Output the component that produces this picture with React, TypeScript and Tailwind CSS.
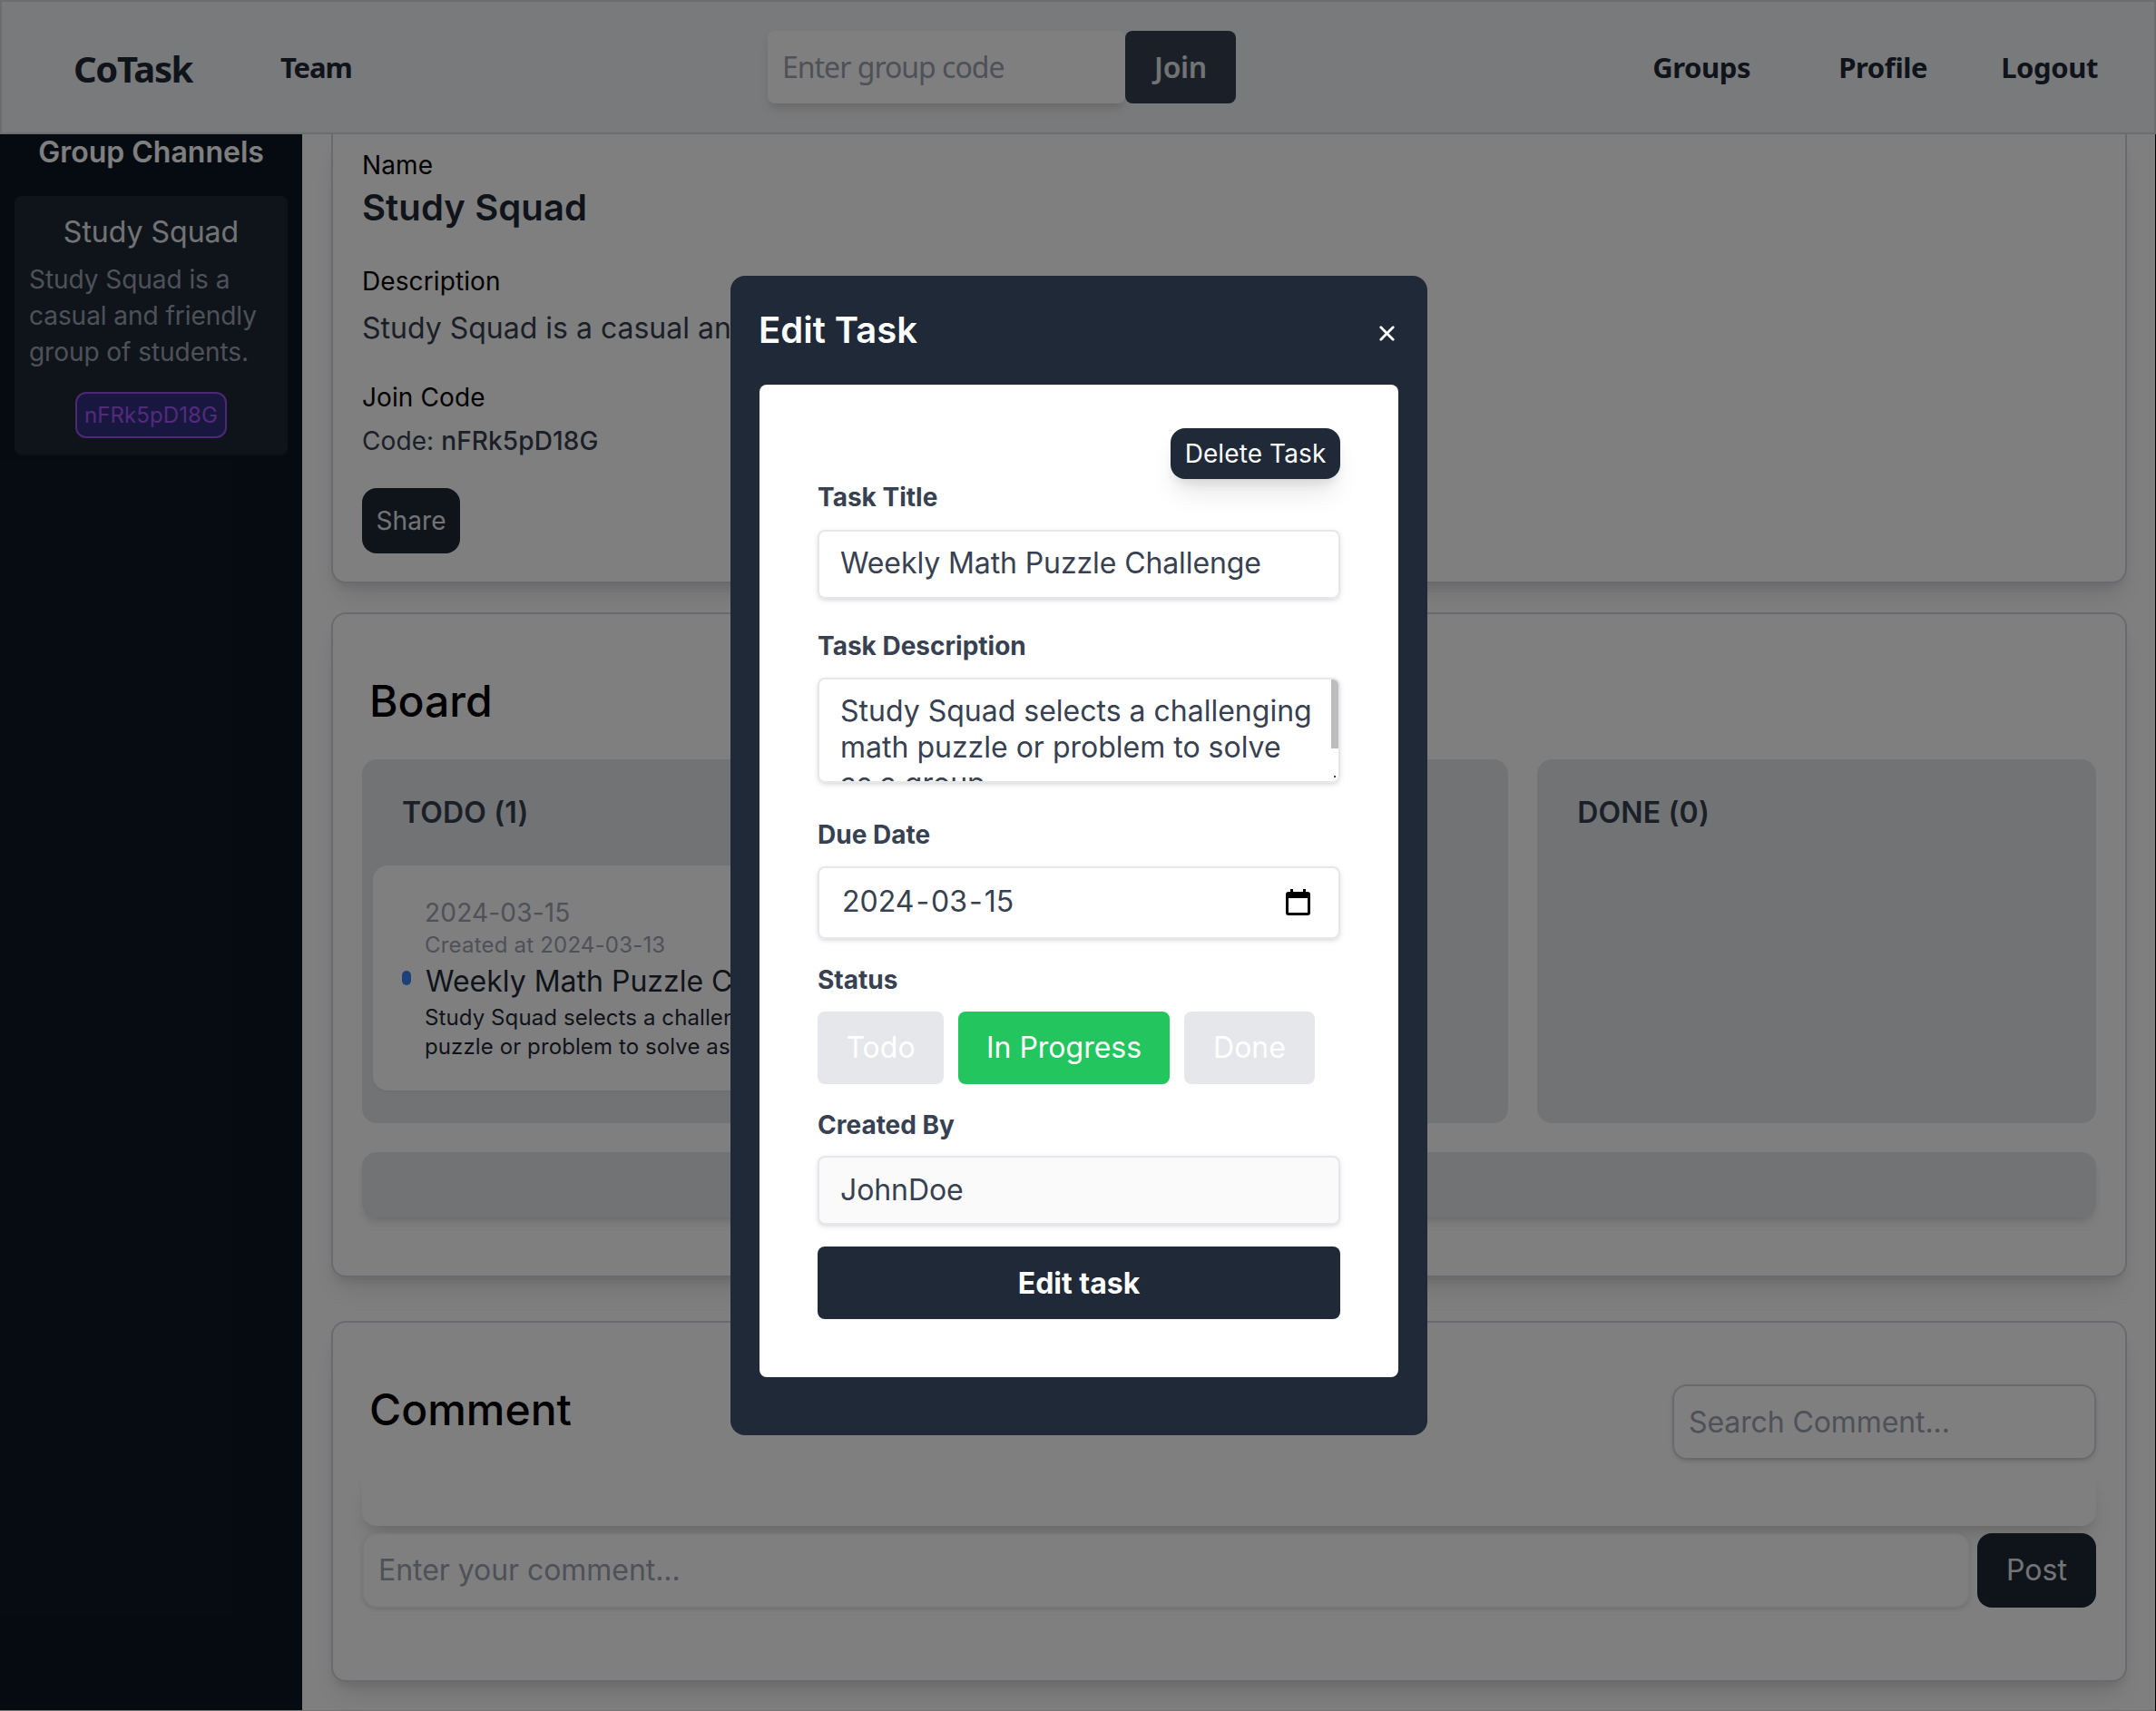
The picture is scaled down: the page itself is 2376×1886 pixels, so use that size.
import type { ReactNode } from "react";

const cardShadow =
  "shadow-[0_20px_30px_-6px_rgba(0,0,0,0.1),0_8px_12px_-4px_rgba(0,0,0,0.1)]";
const fieldShadow =
  "shadow-[0_2px_6px_rgba(0,0,0,0.1),0_2px_4px_-2px_rgba(0,0,0,0.1)]";

function Header() {
  return (
    <header className="flex h-[148px] shrink-0 border-2 border-[#d9dadd] bg-[#f3f4f6] font-['Noto_Sans',sans-serif] text-[31px] leading-[48px] font-bold text-[#1f2937]">
      <div className="ml-[79px] w-[228px] pt-[48px] text-[40px] leading-[52px] tracking-[-1.4px]">CoTask</div>
      <div className="w-[537px] pt-[48px] tracking-[-1.1px]">Team</div>
      <div className="mt-[32px] flex h-20 text-[32px] font-normal">
        <div className="flex h-20 w-[394px] items-center rounded-lg bg-white pl-4 text-[#9ca3af] shadow-[0_8px_12px_-2px_rgba(0,0,0,0.1),0_4px_8px_-4px_rgba(0,0,0,0.1)]">
          <span className="tracking-[-1px]">Enter group code</span>
        </div>
        <div className="flex h-20 w-[122px] items-center justify-center rounded-lg bg-[#374151] font-semibold tracking-[-0.3px] text-[#e5e7eb]">
          Join
        </div>
      </div>
      <nav className="mr-[62px] ml-auto flex pt-[48px] tracking-[-0.4px]">
        <span className="w-[205px]">Groups</span>
        <span className="w-[179px]">Profile</span>
        <span>Logout</span>
      </nav>
    </header>
  );
}

function Sidebar() {
  return (
    <aside className="w-[333px] shrink-0 bg-[#0d1725] text-center">
      <h2 className="text-[32px] leading-[40px] font-semibold text-white">Group Channels</h2>
      <div className="mx-4 mt-7 h-[284px] w-[301px] rounded-lg bg-[#1f2937] px-4 pt-5 shadow-[0_2px_2px_rgba(255,255,255,0.06)]">
        <h3 className="text-[32px] leading-[40px] text-[#e5e7eb]">Study Squad</h3>
        <p className="mt-3 text-left text-[28px] leading-[40px] tracking-[-0.05px] text-[#9ca3af]">
          Study Squad is a<br />casual and friendly<br />group of students.
        </p>
        <div className="mx-auto mt-6 flex h-[51px] w-[167px] items-center justify-center rounded-xl border-2 border-[#9a50e8] bg-[#312e81] text-[24px] tracking-[0.1px] text-[#a855f7]">
          nFRk5pD18G
        </div>
      </div>
    </aside>
  );
}

function GroupInfo() {
  return (
    <section className={`h-[495px] rounded-b-2xl border-2 border-t-0 border-[#d1d5db] bg-white px-8 pt-[14px] text-[28px] leading-[40px] tracking-[0.1px] text-black ${cardShadow}`}>
      <div>Name</div>
      <div className="mt-px text-[40px] leading-[52px] font-semibold text-[#1f2937]">Study Squad</div>
      <div className="mt-[35px]">Description</div>
      <div className="mt-2 text-[32px] leading-[48px] tracking-normal text-[#374151]">
        Study Squad is a casual and friendly group of students.
      </div>
      <div className="mt-[32px]">Join Code</div>
      <div className="mt-2 text-[#374151]">Code: <span className="font-medium">nFRk5pD18G</span></div>
      <button className="mt-8 block h-[72px] w-[108px] rounded-2xl bg-[#1f2937] text-[#e5e7eb]">Share</button>
    </section>
  );
}

function Column({ title, children }: { title: string; children?: ReactNode }) {
  return (
    <div className="h-[401px] flex-1 rounded-2xl bg-[#e5e7eb] pt-[39px]">
      <h3 className="pl-[44px] text-[32px] leading-[40px] font-semibold tracking-[0.15px] text-[#374151]">{title}</h3>
      {children}
    </div>
  );
}

function Board() {
  return (
    <section className={`mt-[32px] h-[733px] rounded-2xl border-2 border-[#d1d5db] bg-white px-8 pt-[64px] ${cardShadow}`}>
      <h2 className="pl-2 text-[48px] leading-[64px] font-medium text-black">Board</h2>
      <div className="mt-[32px] flex gap-8">
        <Column title="TODO (1)">
          <div className="mx-3 mt-[38px] h-[248px] rounded-2xl bg-white pt-[32px] pl-[57px] shadow-[0_2px_4px_rgba(0,0,0,0.05)]">
            <div className="text-[28px] leading-[40px] tracking-[0.2px] text-[#9ca3af]">2024-03-15</div>
            <div className="text-[24px] leading-[32px] tracking-[0.2px] text-[#9ca3af]">Created at 2024-03-13</div>
            <div className="mt-1 -ml-[25px] flex text-[32px] leading-[40px] text-[#1f2937]">
              <span className="mt-[8px] mr-4 h-4 w-[10px] rounded-full bg-[#3b82f6]" />
              Weekly Math Puzzle Challenge
            </div>
            <p className="mt-[4px] text-[24px] leading-[32px] tracking-[0.1px] text-[#1f2937]">
              Study Squad selects a challenging math<br />puzzle or problem to solve as a group.
            </p>
          </div>
        </Column>
        <Column title="IN PROGRESS (0)" />
        <Column title="DONE (0)" />
      </div>
      <div className="mt-8 h-[72px] rounded-2xl bg-[#e5e7eb] shadow-[0_8px_12px_-2px_rgba(0,0,0,0.1),0_4px_8px_-4px_rgba(0,0,0,0.1)]" />
    </section>
  );
}

function Comments() {
  return (
    <section className={`mt-[48px] h-[398px] rounded-2xl border-2 border-[#d1d5db] bg-white px-8 pt-[64px] text-[32px] ${cardShadow}`}>
      <div className="flex justify-between">
        <h2 className="pl-2 text-[48px] leading-[64px] font-medium text-black">Comment</h2>
        <div className={`mt-[4px] flex h-[83px] w-[467px] items-center rounded-2xl border-2 border-[#d1d5db] pl-4 tracking-[-0.1px] text-[#9ca3af] ${fieldShadow}`}>
          Search Comment...
        </div>
      </div>
      <div className={`mt-[9px] h-16 rounded-2xl bg-white ${cardShadow}`} />
      <div className="relative mt-2 flex justify-between">
        <div className={`flex h-[82px] w-[1772px] items-center rounded-2xl border-2 border-[#f3f4f6] bg-white pl-4 tracking-[-0.05px] text-[#9ca3af] ${fieldShadow}`}>
          Enter your comment...
        </div>
        <button className="h-[82px] w-[131px] rounded-2xl bg-[#1f2937] text-[#e5e7eb]">Post</button>
      </div>
    </section>
  );
}

function Label({ children }: { children: ReactNode }) {
  return <div className="text-[28px] leading-[40px] font-bold text-[#374151]">{children}</div>;
}

function CalendarIcon() {
  return (
    <svg viewBox="0 0 27 29" className="h-[29px] w-[27px]">
      <path
        d="M5 0h3v3h11V0h3v3h2a3 3 0 0 1 3 3v20a3 3 0 0 1-3 3H3a3 3 0 0 1-3-3V6a3 3 0 0 1 3-3h2zM3 10v16h21V10z"
        fill="#000"
        fillRule="evenodd"
      />
    </svg>
  );
}

function EditTaskModal() {
  return (
    <div className="ml-[2px] h-[1278px] w-[768px] rounded-2xl bg-[#1f2937] px-8">
      <div className="flex h-[120px] justify-between text-white">
        <h2 className="-ml-px pt-[32px] text-[40px] leading-[56px] font-semibold">Edit Task</h2>
        <svg viewBox="0 0 17 17" className="mt-[55px] mr-1 h-[17px] w-[17px]">
          <path d="M1.8 1.8l13.4 13.4M15.2 1.8l-13.4 13.4" stroke="#fff" strokeWidth="2.8" strokeLinecap="round" />
        </svg>
      </div>
      <div className="h-[1094px] rounded-lg bg-white px-16 pt-12 text-[32px] leading-[40px] text-[#374151]">
        <div className={`ml-auto flex h-14 w-[187px] items-center justify-center rounded-2xl bg-[#1f2937] text-[28px] tracking-[0.1px] text-white ${cardShadow}`}>
          Delete Task
        </div>
        <Label>Task Title</Label>
        <div className={`mt-4 flex h-[76px] items-center rounded-lg border-2 border-[#e5e7eb] pr-6 pb-[3px] pl-[23px] tracking-[-0.1px] ${fieldShadow}`}>
          Weekly Math Puzzle Challenge
        </div>
        <div className="mt-8"><Label>Task Description</Label></div>
        <div className={`relative mt-[15px] h-[116px] overflow-hidden rounded-lg border-2 border-[#e5e7eb] pt-[15px] pr-6 pl-[23px] whitespace-nowrap ${fieldShadow}`}>
          Study Squad selects a challenging<br />math puzzle or problem to solve<br />as a group.
          <span className="absolute top-0 right-0 h-[76px] w-2 bg-[#bdbdbd]" />
          <span className="absolute right-[3px] bottom-[4px] h-[2px] w-[2px] bg-[#444]" />
        </div>
        <div className="mt-[37px]"><Label>Due Date</Label></div>
        <div className={`mt-[15px] flex h-20 items-center justify-between rounded-lg border-2 border-[#e5e7eb] pr-[31px] pb-[2px] pl-[25px] ${fieldShadow}`}>
          <span className="flex">
            2024<span className="px-[2px]">-</span>03<span className="px-[2px]">-</span>15
          </span>
          <CalendarIcon />
        </div>
        <div className="mt-[25px]"><Label>Status</Label></div>
        <div className="mt-[15px] flex gap-4 leading-[80px] text-white">
          <div className="h-[80px] w-[139px] rounded-lg bg-[#e5e7eb] text-center">Todo</div>
          <div className="h-[80px] w-[233px] rounded-lg bg-[#22c55e] text-center">In Progress</div>
          <div className="h-[80px] w-[144px] rounded-lg bg-[#e5e7eb] text-center">Done</div>
        </div>
        <div className="mt-[25px]"><Label>Created By</Label></div>
        <div className={`mt-[14px] flex h-[76px] items-center rounded-lg border-2 border-[#e5e7eb] bg-[#fafafa] px-[23px] tracking-[-0.1px] ${fieldShadow}`}>
          JohnDoe
        </div>
        <div className="mt-6 h-20 rounded-lg bg-[#1f2937] text-center leading-[81px] font-bold text-white">Edit task</div>
      </div>
    </div>
  );
}

export default function App() {
  return (
    <div className="relative h-[1886px] w-[2376px] overflow-hidden bg-black font-['Inter',sans-serif]">
      <div className="flex h-[1885px] flex-col">
        <Header />
        <div className="flex min-h-0 flex-1">
          <Sidebar />
          <main className="min-w-0 flex-1 overflow-hidden bg-white px-8">
            <GroupInfo />
            <Board />
            <Comments />
          </main>
        </div>
      </div>
      <div className="h-px bg-gray-200" />
      <div className="absolute top-[148px] right-0 bottom-0 w-px bg-black" />
      <div className="absolute inset-0 flex items-start justify-center bg-black/50 pt-[304px]">
        <EditTaskModal />
      </div>
    </div>
  );
}
